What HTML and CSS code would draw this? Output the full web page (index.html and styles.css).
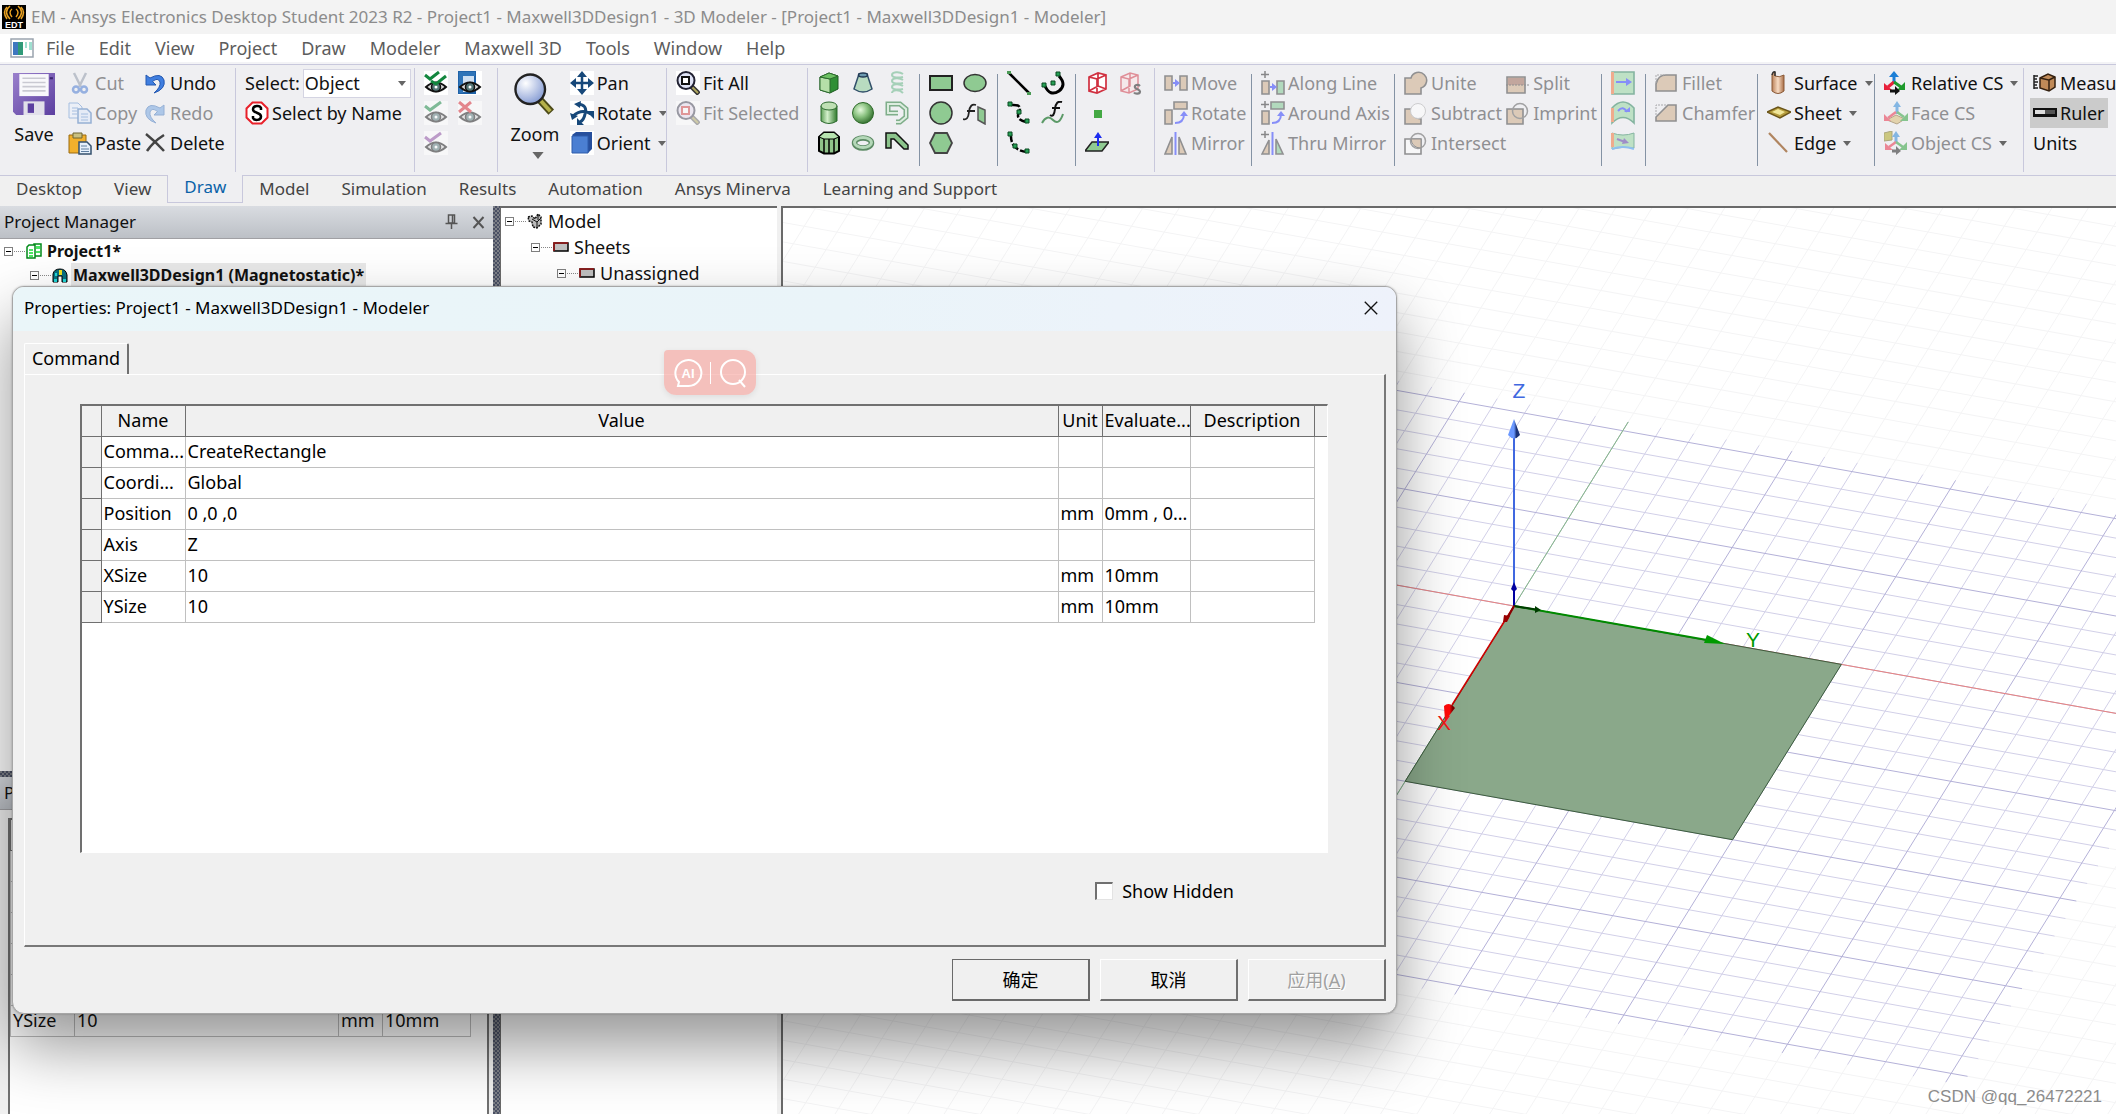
FILE: index.html
```html
<!DOCTYPE html>
<html lang="en">
<head>
<meta charset="utf-8">
<title>EM - Ansys Electronics Desktop Student 2023 R2</title>
<link rel="stylesheet" href="styles.css">
</head>
<body>
<svg class="sprite" aria-hidden="true">
  <defs>
    <linearGradient id="gGreen" x1="0" x2="1"><stop offset="0" stop-color="#5fa058"/><stop offset=".4" stop-color="#d4f0cc"/><stop offset="1" stop-color="#2f7a2c"/></linearGradient>
    <radialGradient id="gBall" cx=".38" cy=".35" r=".7"><stop offset="0" stop-color="#e6fadd"/><stop offset=".5" stop-color="#86bf7c"/><stop offset="1" stop-color="#2e6a2a"/></radialGradient>
    <radialGradient id="gLens" cx=".35" cy=".3" r=".8"><stop offset="0" stop-color="#fff"/><stop offset="1" stop-color="#7b93d0"/></radialGradient>
    <linearGradient id="gTube" x1="0" x2="1"><stop offset="0" stop-color="#b98058"/><stop offset=".5" stop-color="#f8dcc4"/><stop offset="1" stop-color="#a86c44"/></linearGradient>
    <linearGradient id="gSave" x1="0" x2="1" y2="1"><stop offset="0" stop-color="#9a80cc"/><stop offset="1" stop-color="#5c3fa0"/></linearGradient>
  </defs>
  <symbol id="eye" viewBox="0 0 24 24"><path d="M2 16Q12 7 22 16Q12 25 2 16z" fill="#d8d8d8" stroke="#111" stroke-width="2"/><circle cx="12" cy="16" r="4.500" fill="#577" stroke="#111" stroke-width="1.500"/><circle cx="12" cy="16" r="1.500" fill="#fff"/></symbol>
  <symbol id="save" viewBox="0 0 40 40"><path d="M0 0H40V40H3L0 37z" fill="url(#gSave)"/><path d="M6 1H34V22H6z" fill="#f8f8fb"/><path d="M9 5H31M9 9H31M9 13H31M9 17H31" stroke="#c9c9d2" stroke-width="1.500"/><path d="M10 27H30V40H10z" fill="#e2e0ea"/><path d="M14 29H20V38H14z" fill="#5c3fa0"/><path d="M35 4h3v2h-3z" fill="#3a2470"/></symbol>
  <symbol id="cut" viewBox="0 0 24 24"><path d="M6 2l7 14M18 2l-7 14" stroke="#8b95a5" stroke-width="2.500"/><circle cx="8" cy="18.500" r="3" fill="none" stroke="#3f73cf" stroke-width="2.500"/><circle cx="16" cy="18.500" r="3" fill="none" stroke="#3f73cf" stroke-width="2.500"/></symbol>
  <symbol id="copy" viewBox="0 0 24 24"><path d="M1 2H10L14 6V17H1z" fill="#e8f0fc" stroke="#5f8ed0"/><path d="M10 8H19L23 12V22H10z" fill="#dce9fa" stroke="#3f73b8" stroke-width="1.500"/><path d="M4 7h6M4 10h5M4 13h5M13 13h7M13 16h7M13 19h7" stroke="#5f8ed0"/></symbol>
  <symbol id="paste" viewBox="0 0 24 24"><path d="M1 4H18V22H1z" fill="#f1b02c" stroke="#9a6a10"/><path d="M5 2H14V7H5z" fill="#c9c080" stroke="#6e6430"/><path d="M11 11H19L23 15V23H11z" fill="#e6f0fb" stroke="#34506e" stroke-width="1.500"/><path d="M13 15h6M13 18h8M13 20.500h8" stroke="#5f7ea0"/></symbol>
  <symbol id="undo" viewBox="0 0 24 24"><path d="M3 4V14H13L9.500 10.500Q15 6 17 11Q18 16 11 22Q23 18 21 9Q18 1 7 7z" fill="#3f7ee0" stroke="#2458b0"/></symbol>
  <symbol id="redo" viewBox="0 0 24 24"><path d="M21 4V14H11L14.500 10.500Q9 6 7 11Q6 16 13 22Q1 18 3 9Q6 1 17 7z" fill="#6da0e0" stroke="#3f73b8"/></symbol>
  <symbol id="del" viewBox="0 0 24 24"><path d="M3 3Q13 11 21 20M21 4Q10 11 4 20" stroke="#444" stroke-width="2.500" fill="none"/></symbol>
  <symbol id="sname" viewBox="0 0 24 24"><path d="M7.500 1.500H16.500L22.500 7.500V16.500L16.500 22.500H7.500L1.500 16.500V7.500z" fill="#fff" stroke="#e8202a" stroke-width="2"/><path d="M16 9V7C15 4 8 4 8 8.500C8 12.500 16 11 16 15.500C16 20 9 19.500 8 17V15" fill="none" stroke="#000" stroke-width="2.500"/></symbol>
  <symbol id="v1" viewBox="0 0 24 24"><path fill="#fff" d="M0 0h24v24H0z"/><use href="#eye"/><path d="M1 4l5 4 9-7M7 10l5 3 10-8" fill="none" stroke="#12863e" stroke-width="3"/></symbol>
  <symbol id="v2" viewBox="0 0 24 24"><path fill="#fff" d="M0 0h24v24H0z"/><path d="M1 1H17V22H1z" fill="#cfe0f2" stroke="#1f62a8" stroke-width="2"/><path d="M1 1H17V5H1zM1 5H5V22H1z" fill="#2f74b8"/><use href="#eye"/></symbol>
  <symbol id="v3" viewBox="0 0 24 24"><path fill="#fff" d="M0 0h24v24H0z"/><use href="#eye"/><path d="M1 5l5 4L17 1" fill="none" stroke="#12863e" stroke-width="3"/></symbol>
  <symbol id="v4" viewBox="0 0 24 24"><path fill="#fff" d="M0 0h24v24H0z"/><use href="#eye"/><path d="M1 1l12 10M13 1L1 11" fill="none" stroke="#d8202a" stroke-width="3"/></symbol>
  <symbol id="v5" viewBox="0 0 24 24"><path fill="#fff" d="M0 0h24v24H0z"/><use href="#eye"/><path d="M1 6l5 4L17 2" fill="none" stroke="#8a4aa0" stroke-width="3"/></symbol>
  <symbol id="zoom" viewBox="0 0 44 44"><path d="M27 28L39 41" stroke="#4c4a18" stroke-width="8"/><path d="M28 29L38 40" stroke="#b5b04a" stroke-width="4"/><circle cx="17" cy="17" r="15.500" fill="url(#gLens)" stroke="#222" stroke-width="2.500"/></symbol>
  <symbol id="pan" viewBox="0 0 24 24"><path fill="#fff" d="M0 0h24v24H0z"/><path d="M12 3V21M3 12H21" stroke="#17487a" stroke-width="2.500"/><path d="M12 0l5 6H7zM12 24l5-6H7zM0 12l6-5V17zM24 12l-6-5V17z" fill="#17487a"/></symbol>
  <symbol id="rot" viewBox="0 0 24 24"><path fill="#fff" d="M0 0h24v24H0z"/><path d="M8 3Q18 4 15 13Q14 19 10 21M3 15Q12 7 21 13" fill="none" stroke="#17487a" stroke-width="3"/><path d="M11 0L4 3L10 7zM0 12L2 19L8 15zM16 10h8v8zM7 17v7h7z" fill="#17487a"/></symbol>
  <symbol id="orient" viewBox="0 0 24 24"><path fill="#fff" d="M0 0h24v24H0z"/><path d="M2 4L6 1H22V18L18 22z" fill="#274f9c"/><path d="M2 5H18V22H2z" fill="#4b7fd2" stroke="#2f5cab"/></symbol>
  <symbol id="fit" viewBox="0 0 24 24"><path fill="#fff" d="M0 0h24v24H0z"/><path d="M15 15L23 23" stroke="#333" stroke-width="5"/><path d="M16 16L22 22" stroke="#b0a860" stroke-width="2"/><circle cx="10" cy="9.500" r="8.500" fill="#dfe3f5" stroke="#223" stroke-width="2"/><path d="M6 6h7v7H6z" fill="#fff" stroke="#111" stroke-width="2"/></symbol>
  <symbol id="fits" viewBox="0 0 24 24"><path fill="#fff" d="M0 0h24v24H0z"/><path d="M15 15L23 23" stroke="#666" stroke-width="5"/><path d="M16 16L22 22" stroke="#b0a860" stroke-width="2"/><circle cx="10" cy="9.500" r="8.500" fill="#e8dff0" stroke="#445" stroke-width="2"/><path d="M6 6h7v7H6z" fill="#fff" stroke="#d04040" stroke-width="2"/></symbol>
  <symbol id="box" viewBox="0 0 24 24"><path d="M3 6L12 2L21 5V18L13 22L3 19z" fill="#2f8f35" stroke="#1c5a20"/><path d="M3 6L13 8V22L3 19z" fill="#b5dfa8" stroke="#2c6a2e"/><path d="M3 6L12 2L21 5L13 8z" fill="#6cc062" stroke="#2c6a2e"/></symbol>
  <symbol id="frus" viewBox="0 0 24 24"><path d="M8 3H16L21 18Q12 24 3 18z" fill="#b8dbc0" stroke="#31506a" stroke-width="1.500"/><ellipse cx="12" cy="4" rx="4.500" ry="2" fill="#6d9ab0" stroke="#223a55" stroke-width="1.500"/></symbol>
  <symbol id="helix" viewBox="0 0 24 24"><path d="M18 3C14 0 7 1 7 4C7 7 14 7 18 6M18 9C14 6 7 7 7 10C7 13 14 13 18 12M18 15C14 12 7 13 7 16C7 19 14 19 18 18M18 22C14 18 7 19 7 22" fill="none" stroke="#a5d0b8" stroke-width="2"/></symbol>
  <symbol id="cyl" viewBox="0 0 24 24"><path d="M4 5V20Q12 25 20 20V5z" fill="url(#gGreen)" stroke="#2c6a2e"/><ellipse cx="12" cy="5" rx="8" ry="4" fill="#bfe0b4" stroke="#2c6a2e"/></symbol>
  <symbol id="ball" viewBox="0 0 24 24"><circle cx="12" cy="12" r="10.500" fill="url(#gBall)" stroke="#2e6a2a"/></symbol>
  <symbol id="sweep" viewBox="0 0 24 24"><path d="M11 21H15L21 16V8L15 3H3V12H13" fill="none" stroke="#7fae8a" stroke-width="5"/><path d="M11 21H15L21 16V8L15 3H3V12H13" fill="none" stroke="#dcecdf" stroke-width="2"/></symbol>
  <symbol id="poly" viewBox="0 0 24 24"><path d="M2 6L7 1.500H17L22 6V20L17 22.500H7L2 20z" fill="#8fc48a" stroke="#000" stroke-width="2"/><path d="M2 6L7 1.500H17L22 6L17 8H7z" fill="#b7e4b0" stroke="#000"/><path d="M7 8V22M12 8V22M17 8V22" stroke="#000" stroke-width="1.500"/></symbol>
  <symbol id="torus" viewBox="0 0 24 24"><ellipse cx="12" cy="12" rx="8.500" ry="5" fill="none" stroke="#5c8a64" stroke-width="5.500"/><ellipse cx="12" cy="11.500" rx="8.500" ry="5" fill="none" stroke="#b4d8b8" stroke-width="3"/></symbol>
  <symbol id="bond" viewBox="0 0 24 24"><path d="M1 17V2H11L23 14V18H19L9 8H6V17z" fill="#8cc48c" stroke="#111" stroke-width="1.500"/></symbol>
  <symbol id="rect" viewBox="0 0 24 24"><path d="M1 5H23V19H1z" fill="#8fca92" stroke="#222" stroke-width="2"/></symbol>
  <symbol id="ell" viewBox="0 0 24 24"><ellipse cx="12" cy="12" rx="11" ry="8.500" fill="#8fca92" stroke="#333" stroke-width="1.500"/></symbol>
  <symbol id="circ" viewBox="0 0 24 24"><circle cx="12" cy="12" r="11" fill="#8fca92" stroke="#333" stroke-width="1.500"/></symbol>
  <symbol id="fsurf" viewBox="0 0 24 24"><path d="M0 18Q5 20 6 11T13 4M4 10H12" fill="none" stroke="#222" stroke-width="1.800"/><path d="M15 6L22 9V23L15 19z" fill="#8fca92" stroke="#555" stroke-width="1.500"/></symbol>
  <symbol id="hex" viewBox="0 0 24 24"><path d="M6 2H18L23 12L18 22H6L1 12z" fill="#8fca92" stroke="#444" stroke-width="1.800"/></symbol>
  <symbol id="line" viewBox="0 0 24 24"><path d="M2 2L22 22" stroke="#000" stroke-width="2.500"/><path d="M0 0h4v3H0zM20 21h4v3h-4z" fill="#4a9a55"/></symbol>
  <symbol id="arc" viewBox="0 0 24 24"><path d="M18 5Q26 14 18 20Q9 26 4 15" fill="none" stroke="#000" stroke-width="3"/><path d="M15 1h4v4h-4zM1 12h4v4H1zM10 10h4v4h-4z" fill="#25a055" stroke="#0a4a22"/></symbol>
  <symbol id="spl" viewBox="0 0 24 24"><path d="M4 4Q16 3 12 11Q8 19 20 21" fill="none" stroke="#000" stroke-width="2.500" stroke-dasharray="9 2"/><path d="M1 1h4v4H1zM10 9h4v4h-4zM18 18h4v4h-4z" fill="#25a055" stroke="#0a4a22"/></symbol>
  <symbol id="fcur" viewBox="0 0 24 24"><path d="M9 14Q13 17 14 8T21 1M11 7H19" fill="none" stroke="#111" stroke-width="2"/><path d="M1 22Q6 13 12 19T22 13" fill="none" stroke="#5c9a68" stroke-width="2"/></symbol>
  <symbol id="arc3" viewBox="0 0 24 24"><path d="M4 3Q3 19 20 21" fill="none" stroke="#000" stroke-width="2.500" stroke-dasharray="8 2"/><path d="M1 1h4v4H1zM6 13h4v4H6zM18 18h4v4h-4z" fill="#25a055" stroke="#0a4a22"/></symbol>
  <symbol id="rbox" viewBox="0 0 24 24"><path d="M4 6L13 2L21 4V18L12 22L4 20zM4 6L12 8V22M12 8L21 4M13 2V15L4 20M13 15L21 18" fill="#fff" stroke="#d03040" stroke-width="1.700"/></symbol>
  <symbol id="rboxs" viewBox="0 0 24 24"><path d="M2 6L11 2L19 4V18L10 22L2 20zM2 6L10 8V22M10 8L19 4M11 2V15L2 20" fill="#fbe4e6" stroke="#d03040" stroke-width="1.500"/><path d="M21 15C19 13 15 14 16 16.500C17 18.500 21 18 21 20.500C21 23.500 16 23 15 21.500" fill="none" stroke="#111" stroke-width="2.200"/></symbol>
  <symbol id="pt" viewBox="0 0 24 24"><path d="M9 9h8v8H9z" fill="#43a843"/></symbol>
  <symbol id="plane" viewBox="0 0 24 24"><path d="M0 20L7 11H24L17 20z" fill="#8fca92" stroke="#222" stroke-width="1.500"/><path d="M13 15V5" stroke="#1c2cf0" stroke-width="2"/><path d="M13 1l4 6H9z" fill="#1c2cf0"/></symbol>
  <symbol id="mv" viewBox="0 0 24 24"><path d="M1 5H8V19H1zM16 5H23V19H16z" fill="#cba77f" stroke="#333" stroke-width="1.600"/><path d="M9 12H13" stroke="#2030ff" stroke-width="2"/><path d="M11 8l5 4-5 4z" fill="#2030ff"/></symbol>
  <symbol id="ro" viewBox="0 0 24 24"><path d="M1 9H8V23H1zM10 1H23V8H10z" fill="#cba77f" stroke="#333" stroke-width="1.600"/><path d="M11 22Q20 22 20 13" fill="none" stroke="#2030ff" stroke-width="2"/><path d="M16 15l4-5 4 5z" fill="#2030ff"/></symbol>
  <symbol id="mi" viewBox="0 0 24 24"><path d="M8 6V23H1zM15 6V23H22z" fill="#cba77f" stroke="#333" stroke-width="1.600"/><path d="M11.500 1V24" stroke="#2030ff" stroke-width="2"/></symbol>
  <symbol id="al" viewBox="0 0 24 24"><path d="M4 0V7M0 3.500H8" stroke="#222" stroke-width="1.500"/><path d="M1 10H8V23H1z" fill="#cba77f" stroke="#333" stroke-width="1.600"/><path d="M16 10H23V23H16z" fill="#76c48a" stroke="#333" stroke-width="1.600"/><path d="M9 16H13" stroke="#2030ff" stroke-width="2"/><path d="M11 12l5 4-5 4z" fill="#2030ff"/></symbol>
  <symbol id="ar" viewBox="0 0 24 24"><path d="M4 0V7M0 3.500H8" stroke="#222" stroke-width="1.500"/><path d="M1 10H8V23H1z" fill="#cba77f" stroke="#333" stroke-width="1.600"/><path d="M10 1H23V8H10z" fill="#76c48a" stroke="#333" stroke-width="1.600"/><path d="M11 22Q20 22 20 13" fill="none" stroke="#2030ff" stroke-width="2"/><path d="M16 15l4-5 4 5z" fill="#2030ff"/></symbol>
  <symbol id="th" viewBox="0 0 24 24"><path d="M4 0V7M0 3.500H8" stroke="#222" stroke-width="1.500"/><path d="M8 9V23H1z" fill="#cba77f" stroke="#333" stroke-width="1.600"/><path d="M15 8V23H22z" fill="#76c48a" stroke="#333" stroke-width="1.600"/><path d="M11.500 1V24" stroke="#2030ff" stroke-width="2"/></symbol>
  <symbol id="un" viewBox="0 0 24 24"><path d="M1 7H7A8 8 0 1 1 17 17V23H1z" fill="#cba77f" stroke="#333" stroke-width="1.600"/></symbol>
  <symbol id="su" viewBox="0 0 24 24"><path d="M1 8H8Q7 17 17 18V23H1z" fill="#cba77f" stroke="#333" stroke-width="1.600"/><circle cx="14" cy="10" r="7.500" fill="#fff" stroke="#aaa"/></symbol>
  <symbol id="in" viewBox="0 0 24 24"><path d="M1 8H17V23H1z" fill="#fff" stroke="#333" stroke-width="1.600"/><circle cx="14" cy="10" r="7.500" fill="none" stroke="#555" stroke-width="1.500"/><path d="M7 8H17V17Q8 17 7 8z" fill="#cba77f" stroke="#333"/></symbol>
  <symbol id="sp" viewBox="0 0 24 24"><path d="M1 6H19V22H1z" fill="#cba77f" stroke="#333" stroke-width="1.600"/><path d="M2 7H18V14H2z" fill="#97604a"/><path d="M0 14H24" stroke="#333" stroke-dasharray="2 1"/></symbol>
  <symbol id="im" viewBox="0 0 24 24"><path d="M1 8H17V23H1z" fill="#cba77f" stroke="#333" stroke-width="1.600"/><circle cx="14" cy="10" r="7.500" fill="none" stroke="#555" stroke-width="1.500"/></symbol>
  <symbol id="s1" viewBox="0 0 24 24"><path d="M1 1H23V23H1z" fill="#8fd49a" stroke="#1c7a50" stroke-width="1.600"/><path d="M0 1h3v22H0z" fill="#f06a2a"/><path d="M5 11H17" stroke="#2030ff" stroke-width="2"/><path d="M15 7l6 4-6 4z" fill="#2030ff"/></symbol>
  <symbol id="s2" viewBox="0 0 24 24"><path d="M1 7Q12 -5 23 7V22Q12 11 1 22z" fill="#8fd49a" stroke="#1c7a50" stroke-width="1.600"/><path d="M0 7h3v14H0z" fill="#f06a2a"/><path d="M7 10Q12 4 16 11" fill="none" stroke="#2030ff" stroke-width="2"/><path d="M13 11h6V6z" fill="#2030ff"/></symbol>
  <symbol id="s3" viewBox="0 0 24 24"><path d="M1 2Q12 6 23 2V17Q12 15 1 18z" fill="#8fd49a" stroke="#1c7a50"/><path d="M1 18Q12 14 23 18" fill="none" stroke="#3090f0" stroke-width="2"/><path d="M0 2h3v14H0z" fill="#f06a2a"/><path d="M6 8L14 11" stroke="#5030a0" stroke-width="2"/><path d="M13 7l5 5-7 1z" fill="#5030a0"/></symbol>
  <symbol id="fi" viewBox="0 0 24 24"><path d="M1 20V13Q3 4 11 4H21V20z" fill="#cba77f" stroke="#333" stroke-width="1.600"/><path d="M1 12V4H9" fill="none" stroke="#666" stroke-dasharray="2 1"/></symbol>
  <symbol id="ch" viewBox="0 0 24 24"><path d="M1 20V16L13 4H21V20z" fill="#cba77f" stroke="#333" stroke-width="1.600"/><path d="M1 14V4H11" fill="none" stroke="#666" stroke-dasharray="2 1"/></symbol>
  <symbol id="sf" viewBox="0 0 24 24"><path d="M5 4Q5 1 8 1L8 5Q12 7 17 4V20Q11 25 5 20z" fill="url(#gTube)" stroke="#8a5a38"/><path d="M5 4Q6 0 8 1V5" fill="none" stroke="#333" stroke-width="1.500"/></symbol>
  <symbol id="sh" viewBox="0 0 24 24"><path d="M0 11L11 6L24 11L13 17z" fill="#b59c3c" stroke="#6a5418" stroke-width="1.500"/><path d="M5 11L11 8L18 11L13 14z" fill="#f0e69a"/></symbol>
  <symbol id="ed" viewBox="0 0 24 24"><path d="M2 2L20 21" stroke="#b08560" stroke-width="2.200"/></symbol>
  <symbol id="cs" viewBox="0 0 24 24"><path d="M10 13V5" stroke="#1c7fd6" stroke-width="3"/><path d="M10 0l5 6H5z" fill="#1c7fd6"/><path d="M10 11L4 16" stroke="#e8203a" stroke-width="3"/><path d="M0 12V19H8z" fill="#e8203a"/><path d="M10 11L17 16" stroke="#1f9a2c" stroke-width="3"/><path d="M21 11V19H13z" fill="#1f9a2c"/><path d="M6 20H13" stroke="#111" stroke-width="3"/><path d="M11 15l5 5-5 4z" fill="#111"/></symbol>
  <symbol id="fcs" viewBox="0 0 24 24"><path d="M3 19L12 14L21 18L13 23z" fill="#d8b96a" stroke="#7a5a20"/><path d="M13 13V5" stroke="#1c7fd6" stroke-width="3"/><path d="M13 0l4 6H9z" fill="#1c7fd6"/><path d="M12 11L4 17" stroke="#e8203a" stroke-width="2.500"/><path d="M0 13V20H7z" fill="#e8203a"/><path d="M13 11L20 16" stroke="#1f9a2c" stroke-width="2.500"/><path d="M24 12V20H16z" fill="#1f9a2c"/></symbol>
  <symbol id="ocs" viewBox="0 0 24 24"><path d="M0 2L8 0V9L0 10z" fill="#a8a010" stroke="#665f08"/><path d="M12 12V5" stroke="#1c7fd6" stroke-width="3"/><path d="M12 0l4 6H8z" fill="#1c7fd6"/><path d="M12 11L5 16" stroke="#e8203a" stroke-width="2.500"/><path d="M1 12V19H9z" fill="#e8203a"/><path d="M12 11L19 16" stroke="#1f9a2c" stroke-width="2.500"/><path d="M23 11V19H15z" fill="#1f9a2c"/><path d="M8 20H13" stroke="#111" stroke-width="3"/><path d="M12 15l5 5-5 4z" fill="#111"/></symbol>
  <symbol id="me" viewBox="0 0 24 24"><path d="M1 4V18M1 5H5M1 8H4M1 11H5M1 14H4M1 17H5" stroke="#222" stroke-width="1.500"/><path d="M7 7L15 3L22 6V16L16 20L7 17z" fill="#c08a58" stroke="#332010" stroke-width="1.500"/><path d="M7 7L16 9V20M16 9L22 6" fill="none" stroke="#332010" stroke-width="1.500"/></symbol>
  <symbol id="ru" viewBox="0 0 24 24"><path d="M0 7H24V16H0z" fill="#111"/><path d="M2 9H12V13H2z" fill="#ddd"/><path d="M12 9H22V13H12z" fill="#555"/></symbol>
  <symbol id="dd" viewBox="0 0 8 5"><path d="M0 0H8L4 5z" fill="#666"/></symbol>
  <symbol id="sheet" viewBox="0 0 16 16"><path d="M1 4H15V12H1z" fill="#c0c0c0" stroke="#000" stroke-width="1.500"/><path d="M15 4H1V12" fill="none" stroke="#a01818" stroke-width="1.500"/></symbol>
</svg>

<header class="titlebar">
  <svg class="i" viewBox="0 0 24 24" aria-hidden="true"><path d="M0 0h24v24H0z"/><path d="M8 1Q1 7 8 14M10 4Q6 7 10 12M16 1Q23 7 16 14M14 4Q18 7 14 12M5 2Q0 7 5 14M19 2Q24 7 19 14" fill="none" stroke="#e8a020" stroke-width="1.500"/><text x="12" y="23" class="edt">EDT</text></svg>
  <h1>EM - Ansys Electronics Desktop Student 2023 R2 - Project1 - Maxwell3DDesign1 - 3D Modeler - [Project1 - Maxwell3DDesign1 - Modeler]</h1>
</header>

<nav class="menubar" aria-label="Menu">
  <svg class="i appwin" viewBox="0 0 24 20" aria-hidden="true"><path d="M1 1H23V19H1z" fill="#fff" stroke="#9aa4ae" stroke-width="1.500"/><path d="M3 4H13V17H3z" fill="#2f9a78"/><path d="M3 4H8V17H3z" fill="#3f78c0"/><path d="M15 4H17V10H15zM19 4H22V12H19z" fill="#9fe0d0"/></svg>
  <button>File</button><button>Edit</button><button>View</button><button>Project</button><button>Draw</button><button>Modeler</button><button>Maxwell 3D</button><button>Tools</button><button>Window</button><button>Help</button>
</nav>

<section class="ribbon" aria-label="Draw tools">
  <div class="group clip">
    <button class="big"><svg class="big-icon"><use href="#save"/></svg>Save</button>
    <div class="rows">
      <button class="t" disabled><svg class="i"><use href="#cut"/></svg>Cut</button>
      <button class="t" disabled><svg class="i"><use href="#copy"/></svg>Copy</button>
      <button class="t"><svg class="i"><use href="#paste"/></svg>Paste</button>
    </div>
    <div class="rows">
      <button class="t"><svg class="i"><use href="#undo"/></svg>Undo</button>
      <button class="t" disabled><svg class="i"><use href="#redo"/></svg>Redo</button>
      <button class="t"><svg class="i"><use href="#del"/></svg>Delete</button>
    </div>
  </div>
  <div class="group select">
    <div class="rows">
      <div class="t pick"><label for="mode">Select:</label><span class="combo"><select id="mode"><option>Object</option><option>Face</option></select><svg class="dd"><use href="#dd"/></svg></span></div>
      <button class="t"><svg class="i"><use href="#sname"/></svg>Select by Name</button>
    </div>
  </div>
  <div class="group icons">
    <button aria-label="Show selection"><svg class="i"><use href="#v1"/></svg></button>
    <button aria-label="Visibility dialog"><svg class="i"><use href="#v2"/></svg></button>
    <button aria-label="Show in view" disabled><svg class="i"><use href="#v3"/></svg></button>
    <button aria-label="Hide in view" disabled><svg class="i"><use href="#v4"/></svg></button>
    <button aria-label="Show only" disabled><svg class="i"><use href="#v5"/></svg></button>
  </div>
  <div class="group">
    <button class="big zoom"><svg class="big-icon"><use href="#zoom"/></svg>Zoom<svg class="dd wide"><use href="#dd"/></svg></button>
    <div class="rows">
      <button class="t"><svg class="i"><use href="#pan"/></svg>Pan</button>
      <button class="t"><svg class="i"><use href="#rot"/></svg>Rotate<svg class="dd"><use href="#dd"/></svg></button>
      <button class="t"><svg class="i"><use href="#orient"/></svg>Orient<svg class="dd"><use href="#dd"/></svg></button>
    </div>
  </div>
  <div class="group">
    <div class="rows">
      <button class="t"><svg class="i"><use href="#fit"/></svg>Fit All</button>
      <button class="t" disabled><svg class="i"><use href="#fits"/></svg>Fit Selected</button>
    </div>
  </div>
  <div class="group icons three inner">
    <button aria-label="Box"><svg class="i"><use href="#box"/></svg></button>
    <button aria-label="Cone"><svg class="i"><use href="#frus"/></svg></button>
    <button aria-label="Helix"><svg class="i"><use href="#helix"/></svg></button>
    <button aria-label="Cylinder"><svg class="i"><use href="#cyl"/></svg></button>
    <button aria-label="Sphere"><svg class="i"><use href="#ball"/></svg></button>
    <button aria-label="Spiral"><svg class="i"><use href="#sweep"/></svg></button>
    <button aria-label="Regular polyhedron"><svg class="i"><use href="#poly"/></svg></button>
    <button aria-label="Torus"><svg class="i"><use href="#torus"/></svg></button>
    <button aria-label="Bondwire"><svg class="i"><use href="#bond"/></svg></button>
  </div>
  <div class="group icons inner">
    <button aria-label="Rectangle"><svg class="i"><use href="#rect"/></svg></button>
    <button aria-label="Ellipse"><svg class="i"><use href="#ell"/></svg></button>
    <button aria-label="Circle"><svg class="i"><use href="#circ"/></svg></button>
    <button aria-label="Equation surface"><svg class="i"><use href="#fsurf"/></svg></button>
    <button aria-label="Regular polygon"><svg class="i"><use href="#hex"/></svg></button>
  </div>
  <div class="group icons inner">
    <button aria-label="Line"><svg class="i"><use href="#line"/></svg></button>
    <button aria-label="Center arc"><svg class="i"><use href="#arc"/></svg></button>
    <button aria-label="Spline"><svg class="i"><use href="#spl"/></svg></button>
    <button aria-label="Equation curve"><svg class="i"><use href="#fcur"/></svg></button>
    <button aria-label="Three point arc"><svg class="i"><use href="#arc3"/></svg></button>
  </div>
  <div class="group icons">
    <button aria-label="Region"><svg class="i"><use href="#rbox"/></svg></button>
    <button aria-label="Subregion" disabled><svg class="i"><use href="#rboxs"/></svg></button>
    <button class="first" aria-label="Point"><svg class="i"><use href="#pt"/></svg></button>
    <button class="first" aria-label="Plane"><svg class="i"><use href="#plane"/></svg></button>
  </div>
  <div class="group inner">
    <div class="rows">
      <button class="t" disabled><svg class="i"><use href="#mv"/></svg>Move</button>
      <button class="t" disabled><svg class="i"><use href="#ro"/></svg>Rotate</button>
      <button class="t" disabled><svg class="i"><use href="#mi"/></svg>Mirror</button>
    </div>
  </div>
  <div class="group inner">
    <div class="rows">
      <button class="t" disabled><svg class="i"><use href="#al"/></svg>Along Line</button>
      <button class="t" disabled><svg class="i"><use href="#ar"/></svg>Around Axis</button>
      <button class="t" disabled><svg class="i"><use href="#th"/></svg>Thru Mirror</button>
    </div>
  </div>
  <div class="group inner bool">
    <div class="rows">
      <button class="t" disabled><svg class="i"><use href="#un"/></svg>Unite</button>
      <button class="t" disabled><svg class="i"><use href="#su"/></svg>Subtract</button>
      <button class="t" disabled><svg class="i"><use href="#in"/></svg>Intersect</button>
    </div>
    <div class="rows">
      <button class="t" disabled><svg class="i"><use href="#sp"/></svg>Split</button>
      <button class="t" disabled><svg class="i"><use href="#im"/></svg>Imprint</button>
    </div>
  </div>
  <div class="group inner">
    <div class="rows">
      <button class="t" aria-label="Sweep along vector" disabled><svg class="i"><use href="#s1"/></svg></button>
      <button class="t" aria-label="Sweep around axis" disabled><svg class="i"><use href="#s2"/></svg></button>
      <button class="t" aria-label="Sweep along path" disabled><svg class="i"><use href="#s3"/></svg></button>
    </div>
  </div>
  <div class="group inner">
    <div class="rows">
      <button class="t" disabled><svg class="i"><use href="#fi"/></svg>Fillet</button>
      <button class="t" disabled><svg class="i"><use href="#ch"/></svg>Chamfer</button>
    </div>
  </div>
  <div class="group inner">
    <div class="rows">
      <button class="t"><svg class="i"><use href="#sf"/></svg>Surface<svg class="dd"><use href="#dd"/></svg></button>
      <button class="t"><svg class="i"><use href="#sh"/></svg>Sheet<svg class="dd"><use href="#dd"/></svg></button>
      <button class="t"><svg class="i"><use href="#ed"/></svg>Edge<svg class="dd"><use href="#dd"/></svg></button>
    </div>
  </div>
  <div class="group">
    <div class="rows">
      <button class="t"><svg class="i"><use href="#cs"/></svg>Relative CS<svg class="dd"><use href="#dd"/></svg></button>
      <button class="t" disabled><svg class="i"><use href="#fcs"/></svg>Face CS</button>
      <button class="t" disabled><svg class="i"><use href="#ocs"/></svg>Object CS<svg class="dd"><use href="#dd"/></svg></button>
    </div>
  </div>
  <div class="group units">
    <div class="rows">
      <button class="t"><svg class="i"><use href="#me"/></svg>Measure</button>
      <button class="t on" aria-pressed="true"><svg class="i"><use href="#ru"/></svg>Ruler</button>
      <button class="t">Units</button>
    </div>
  </div>
</section>

<nav class="tabs" aria-label="Ribbon tabs">
  <button>Desktop</button><button>View</button><button class="active">Draw</button><button>Model</button><button>Simulation</button><button>Results</button><button>Automation</button><button>Ansys Minerva</button><button>Learning and Support</button>
</nav>

<main class="work">
  <div class="left">
    <section class="manager">
      <header class="panel-head"><h2>Project Manager</h2>
        <button aria-label="Pin"><svg viewBox="0 0 14 16"><path d="M4 1H10V9H4zM8 1V9M1 9.500H13M7 10V15" fill="none" stroke="#555" stroke-width="1.500"/></svg></button>
        <button aria-label="Close"><svg viewBox="0 0 14 16"><path d="M2 3L12 14M12 3L2 14" stroke="#555" stroke-width="2"/></svg></button>
      </header>
      <ul class="tree bold">
        <li><span class="exp"></span><svg class="n" viewBox="0 0 16 16"><path d="M8 1H15V13H8z" fill="#fff" stroke="#008a18" stroke-width="1.500"/><path d="M1 4L3 2H9V15H1z" fill="#fff" stroke="#008a18" stroke-width="1.500"/><path d="M3 7H7M3 10H7M3 13H7M11 3V6M13 3V6M11 8V10M13 8V10" stroke="#10e030" stroke-width="1.500"/></svg>Project1*</li>
        <li class="l2"><span class="exp"></span><svg class="n" viewBox="0 0 16 16"><path d="M1 15V7Q2 2 8 2T15 8V15H10V9H6V15z" fill="#0a7080" stroke="#000"/><path d="M2 12h3v3H2zM11 12h3v3h-3zM3 6h2v3H3z" fill="#20d8d8"/><path d="M7 3h3v5H7z" fill="#f0e020"/></svg><span class="sel">Maxwell3DDesign1 (Magnetostatic)*</span></li>
      </ul>
    </section>
    <div class="hsplit"></div>
    <section class="props">
      <header class="panel-head"><h2>Properties</h2></header>
      <div class="props-frame">
        <table class="mini">
          <colgroup><col class="m-name"><col><col class="m-unit"><col class="m-eval"></colgroup>
          <thead><tr><th>Name</th><th>Value</th><th>Unit</th><th>Evalu...</th></tr></thead>
          <tbody>
            <tr><td>Com...</td><td>CreateRectangle</td><td></td><td></td></tr>
            <tr><td>Coo...</td><td>Global</td><td></td><td></td></tr>
            <tr><td>Posi...</td><td>0 ,0 ,0</td><td>mm</td><td>0mm , 0...</td></tr>
            <tr><td>Axis</td><td>Z</td><td></td><td></td></tr>
            <tr><td>XSize</td><td>10</td><td>mm</td><td>10mm</td></tr>
            <tr><td>YSize</td><td>10</td><td>mm</td><td>10mm</td></tr>
          </tbody>
        </table>
      </div>
    </section>
  </div>
  <div class="vsplit"></div>
  <section class="model">
    <ul class="tree">
      <li><span class="exp"></span><svg class="n" viewBox="0 0 16 16"><path d="M1 4L5 3L8 6L11 1L14 4V11L10 15L6 14L5 9L2 8z" fill="#bbb" stroke="#111" stroke-width="1.500" stroke-dasharray="2 1"/><path d="M5 6L10 9L14 5M10 9V15M11 2V7" stroke="#111" fill="none"/></svg>Model</li>
      <li class="l2"><span class="exp"></span><svg class="n"><use href="#sheet"/></svg>Sheets</li>
      <li class="l3"><span class="exp"></span><svg class="n"><use href="#sheet"/></svg>Unassigned</li>
    </ul>
  </section>
  <section class="viewer" aria-label="3D view">
    <svg class="scene" viewBox="0 0 1333 906" preserveAspectRatio="xMinYMin slice">
      <defs>
        <linearGradient id="cz" x1="0" x2="1"><stop offset=".5" stop-color="#6a98ff"/><stop offset=".7" stop-color="#1c3478"/></linearGradient>
        <linearGradient id="cx" x1="0" x2="1"><stop offset=".5" stop-color="#ff0a0a"/><stop offset=".8" stop-color="#700"/></linearGradient>
      </defs>
      <g id="grid" transform="matrix(32.740 5.840 -10.880 17.530 731 398)">
        <path class="faint" id="far"/>
        <path class="blank" d="M-10.500 -10.500H20.500V20.500H-10.500z"/>
        <path class="minor" id="minor"/>
        <path class="major" id="major"/>
        <path class="ax-r" d="M-10.500 0H20.500"/>
        <path class="ax-g" d="M0 -10.500V20.500"/>
        <path class="plate" d="M0 0H10V10H0z"/>
      </g>
      <path d="M731 398V228" stroke="#4068e0" stroke-width="2"/><path d="M731 398V376" stroke="#0000a0" stroke-width="2"/>
      <path d="M731 211L737 227Q731 234 725 227z" fill="url(#cz)"/><path d="M731 374l3 7-3 3-3-3z" fill="#0000a0"/>
      <path d="M731 398L924 432" stroke="#008a00" stroke-width="2"/><path d="M731 398L756 402" stroke="#003c00" stroke-width="2"/><path d="M752 398l6 4-6 3z" fill="#003c00"/>
      <path d="M924 427L942 436L921 435z" fill="#009a00"/>
      <path d="M731 398L669 497" stroke="#d00000" stroke-width="1.500"/><path d="M731 398L724 411" stroke="#800" stroke-width="2"/><path d="M721 407l6 1-3 6-4 0z" fill="#900"/>
      <path d="M661 498Q666 493 672 500L662 513z" fill="url(#cx)"/>
      <text x="736" y="190" class="lz">Z</text><text x="970" y="439" class="ly">Y</text><text x="661" y="522" class="lx">X</text>
    </svg>
    <p class="mark">CSDN @qq_26472221</p>
  </section>
</main>

<div class="dialog" role="dialog" aria-labelledby="dlg-title">
  <header class="dlg-head"><h2 id="dlg-title">Properties: Project1 - Maxwell3DDesign1 - Modeler</h2>
    <button aria-label="Close"><svg viewBox="0 0 18 18"><path d="M2 2L16 16M16 2L2 16" stroke="#111" stroke-width="1.500"/></svg></button></header>
  <div class="dlg-body">
    <div class="dlg-tabs"><button>Command</button></div>
    <div class="page">
      <div class="list">
        <table class="grid">
          <colgroup><col class="c-stub"><col class="c-name"><col><col class="c-unit"><col class="c-eval"><col class="c-desc"><col class="c-end"></colgroup>
          <thead><tr><th></th><th>Name</th><th>Value</th><th>Unit</th><th>Evaluate...</th><th>Description</th><th></th></tr></thead>
          <tbody>
            <tr><th></th><td>Comma...</td><td>CreateRectangle</td><td></td><td></td><td></td></tr>
            <tr><th></th><td>Coordi...</td><td>Global</td><td></td><td></td><td></td></tr>
            <tr><th></th><td>Position</td><td>0 ,0 ,0</td><td>mm</td><td>0mm , 0...</td><td></td></tr>
            <tr><th></th><td>Axis</td><td>Z</td><td></td><td></td><td></td></tr>
            <tr><th></th><td>XSize</td><td>10</td><td>mm</td><td>10mm</td><td></td></tr>
            <tr><th></th><td>YSize</td><td>10</td><td>mm</td><td>10mm</td><td></td></tr>
          </tbody>
        </table>
      </div>
      <label class="hidden-opt"><input type="checkbox">Show Hidden</label>
    </div>
    <div class="actions"><button class="default">确定</button><button>取消</button><button disabled>应用(<u>A</u>)</button></div>
  </div>
  <div class="badge">
    <svg viewBox="0 0 30 32" aria-hidden="true"><path d="M5 29L6 25A13 13 0 1 1 15 29z" fill="none" stroke="#fff" stroke-width="2"/><text x="15" y="21">AI</text></svg>
    <span></span>
    <svg viewBox="0 0 30 32" aria-hidden="true"><circle cx="15" cy="15" r="12" fill="none" stroke="#fff" stroke-width="2"/><path d="M21 23L27 30" stroke="#fff" stroke-width="2"/></svg>
  </div>
</div>
<script src="grid.js"></script>
</body>
</html>
```
FILE: grid.js
```js
// Builds the floor grid: fine lines every unit, strong lines every five units.
const far = [], minor = [], major = [];
for (let k = -60; k <= 60; k++) far.push(`M-60 ${k}H60M${k} -60V60`);
for (let k = -10; k <= 20; k++) {
  (k % 5 ? minor : major).push(`M-10.5 ${k}H20.5M${k} -10.5V20.5`);
}
document.getElementById('far').setAttribute('d', far.join(''));
document.getElementById('minor').setAttribute('d', minor.join(''));
document.getElementById('major').setAttribute('d', major.join(''));
```
FILE: styles.css
```css
* { box-sizing: border-box; }
body {
  margin: 0;
  height: 100vh;
  overflow: hidden;
  display: flex;
  flex-direction: column;
  background: #f0f0f0;
  color: #111;
  font: 18px/24px "Noto Sans", "Noto Sans CJK SC", sans-serif;
}
button { font: inherit; color: inherit; background: none; border: 0; padding: 0; margin: 0; white-space: nowrap; }
h1, h2 { margin: 0; font-size: 17px; font-weight: 400; white-space: nowrap; }
svg { display: block; flex: none; }
.sprite { position: absolute; width: 0; height: 0; }
.i { width: 24px; height: 24px; }

.titlebar { flex: none; height: 34px; padding: 0 2px; display: flex; align-items: center; gap: 5px; background: #f3f3f3; color: #8c8c8c; overflow: hidden; }
.edt { font: bold 9px "Liberation Sans", sans-serif; fill: #fff; text-anchor: middle; }

.menubar { flex: none; height: 30px; padding: 0 10px; display: flex; align-items: center; background: #fff; color: #5c5c5c; border-bottom: 2px solid #f3f3f6; }
.menubar button { padding: 0 12px; }
.appwin { width: 24px; height: 20px; }

.ribbon {
  flex: none;
  height: 112px;
  display: grid;
  grid-template-columns: 236px 179px 83px 169px 141px 112px 78px 78px 79px 97px 143px 207px 44px 112px 117px 149px 1fr;
  border: solid #c8c8dc;
  border-width: 1px 0;
  background: #efeff2;
  overflow: hidden;
}
.group { position: relative; display: flex; align-items: flex-start; padding: 3px 0 0 9px; overflow: hidden; }
.group::after { content: ""; position: absolute; right: 0; top: 3px; bottom: 3px; width: 1px; background: #c8c8dc; }
.group.inner::after { top: 9px; bottom: 9px; background: #8492a4; }
.group.units::after { content: none; }
.rows { display: grid; grid-auto-rows: 30px; justify-items: start; }
.t { display: flex; align-items: center; gap: 3px; }
.t:disabled, .icons button:disabled { color: #8f8f92; }
button:disabled .i { opacity: .5; }
.dd { width: 8px; height: 5px; margin-left: 4px; }
.dd.wide { width: 14px; height: 7px; margin: 6px 0 0 6px; }
.big { display: flex; flex-direction: column; align-items: center; width: 46px; padding-top: 5px; margin-left: 2px; }
.big-icon { width: 42px; height: 42px; margin-bottom: 7px; }
.clip .rows { width: 78px; padding-left: 11px; }
.clip .rows + .rows { padding-left: 8px; width: 90px; }
.zoom { width: 56px; margin: 0 7px 0 0; }
.select .pick { gap: 3px; }
.combo { display: grid; align-items: center; width: 108px; height: 29px; }
.combo select { grid-area: 1 / 1; width: 100%; height: 100%; padding: 0 1px; appearance: none; border: 1px solid #d4d4e2; border-radius: 0; background: #fff; font: inherit; color: inherit; }
.combo .dd { grid-area: 1 / 1; justify-self: end; margin-right: 5px; }
.icons { display: grid; grid-template-columns: 34px 34px; grid-auto-rows: 30px; align-items: center; }
.icons.three { grid-template-columns: 34px 34px 34px; }
.icons .first { grid-column: 1; }
.bool .rows { width: 104px; }
.units .rows { margin-left: -3px; }
.units .t { padding: 0 3px; height: 30px; }
.units .on { background: #cbcbcb; }

.tabs { flex: none; height: 30px; display: flex; align-items: flex-start; color: #444; font-size: 17px; line-height: 24px; }
.tabs button { height: 28px; padding: 0 16px 3px; }
.tabs .active { color: #0a62a8; background: #efeff2; border: solid #c8c8dc; border-width: 0 1px 1px; margin-top: -1px; }

.work { flex: 1; min-height: 0; display: flex; }
.left { flex: none; width: 493px; display: flex; flex-direction: column; }
.manager { flex: none; height: 565px; background: #fff; }
.panel-head { height: 33px; display: flex; align-items: center; padding: 0 7px 0 4px; gap: 12px; background: linear-gradient(#d9dce1, #bcc0c6); border-bottom: 1px solid #a0a0a4; }
.panel-head h2 { flex: 1; }
.panel-head svg { width: 15px; height: 16px; }
.hsplit, .vsplit { flex: none; background: repeating-conic-gradient(#4a5064 0 25%, #7e8188 0 50%) 0 0 / 4px 4px; }
.hsplit { height: 6px; }
.vsplit { width: 7px; }

.tree { margin: 0; padding: 0 0 0 4px; list-style: none; }
.tree li { display: flex; align-items: center; height: 26px; white-space: nowrap; }
.tree .l2 { padding-left: 26px; }
.tree .l3 { padding-left: 52px; }
.tree .n { width: 16px; height: 16px; margin-right: 5px; }
.exp { position: relative; width: 9px; height: 9px; border: 1px solid #808080; margin-right: 13px; background: linear-gradient(#000, #000) 1px 3px / 5px 1px no-repeat; }
.exp::after { content: ""; position: absolute; left: 9px; top: 3px; width: 11px; border-top: 1px dotted #888; }
.bold { font-weight: 700; font-size: 16px; }
.bold li { height: 24px; }
.sel { background: #e8e8e8; padding: 0 2px; margin-left: -2px; }

.props { flex: 1; min-height: 0; display: flex; flex-direction: column; }
.props-frame { flex: 1; margin: 8px 4px 0 8px; border: solid #707070; border-width: 2px 2px 0; background: #fff; }
table { border-collapse: collapse; table-layout: fixed; }
.mini { width: 461px; }
.mini th, .mini td, .grid th, .grid td { height: 31px; padding: 0 2px 1px; text-align: left; font-weight: 400; white-space: nowrap; overflow: hidden; border: 1px solid #bdbdbd; }
.mini tr > * { border-top: 0; }
.mini thead th, .grid thead th { height: 30px; }
.m-name { width: 64px; } .m-unit { width: 44px; } .m-eval { width: 88px; }

.model { flex: none; width: 277px; margin-right: 4px; border: solid #6a6a6a; border-width: 2px 0 0 1px; background: #fff; }
.viewer { flex: 1; min-width: 0; position: relative; border: solid #6a6a6a; border-width: 2px 0 0 2px; background: #fff; overflow: hidden; }
.scene { width: 100%; height: 100%; }
#grid path { fill: none; vector-effect: non-scaling-stroke; stroke-width: 1px; }
#grid .faint { stroke: #f4f4f5; }
#grid .blank { fill: #fff; }
#grid .minor { stroke: #d2d0e8; }
#grid .major { stroke: #b4b1d8; }
#grid .ax-r { stroke: #ea8480; }
#grid .ax-g { stroke: #88bc88; }
#grid .plate { fill: #8aa88a; stroke: #3c5c3c; }
.scene text { font: 21px "Liberation Sans", sans-serif; text-anchor: middle; }
.lz { fill: #4068e0; } .ly { fill: #009a00; } .lx { fill: #f01818; }
.mark { position: absolute; right: 14px; bottom: 5px; margin: 0; font: 17px/24px "Liberation Sans", sans-serif; color: #8c8c8c; }

.dialog {
  position: absolute;
  left: 12px;
  top: 286px;
  width: min(1385px, 100% - 24px);
  display: flex;
  flex-direction: column;
  background: #f0f0f0;
  border: 1px solid #a6a6a6;
  border-radius: 12px;
  box-shadow: 0 0 2px rgba(0, 0, 0, .3), 0 32px 64px rgba(0, 0, 0, .42);
  color: #000;
}
.dlg-head { height: 44px; padding: 0 17px 2px 11px; display: flex; align-items: center; justify-content: space-between; border-radius: 11px 11px 0 0; background: linear-gradient(90deg, #eaf6f9, #eaf4f9 60%, #eef2fb); }
.dlg-head svg { width: 16px; height: 16px; }
.dlg-body { padding: 12px 10px 12px 11px; }
.dlg-tabs { display: flex; }
.dlg-tabs button { height: 31px; width: 105px; padding-bottom: 3px; border: solid; border-width: 1px 2px 0 1px; border-color: #fff #707070 #fff #fff; border-radius: 2px 2px 0 0; }
.page { padding: 29px 56px 42px 55px; border: solid; border-width: 1px 2px 2px 1px; border-color: #fff #787878 #787878 #fff; }
.list { height: 449px; background: #fff; border: solid; border-width: 2px 1px 1px 2px; border-color: #707070 #fff #fff #707070; }
.grid { width: 100%; }
.grid tr > * { border-color: #c0c0c0; border-top: 0; }
.grid th, .mini th { background: #f0f0f0; text-align: center; border-color: #707070; }
.grid thead th:last-child { border-right: 0; }
.grid tr > :first-child { border-left: 0; }
.c-stub { width: 19px; } .c-name { width: 84px; } .c-unit { width: 44px; } .c-eval { width: 88px; } .c-desc { width: 124px; } .c-end { width: 13px; }
.hidden-opt { display: flex; align-items: center; justify-content: flex-end; gap: 9px; margin: 26px 94px 0 0; }
.hidden-opt input { appearance: none; width: 18px; height: 18px; margin: 0; background: #fff; border: solid; border-width: 2px 1px 1px 2px; border-color: #707070 #e3e3e3 #e3e3e3 #707070; }
.actions { display: flex; justify-content: flex-end; gap: 10px; margin-top: 12px; }
.actions button { width: 138px; height: 42px; border: solid; border-width: 1px 2px 2px 1px; border-color: #fff #707070 #707070 #fff; }
.actions .default { border-color: #6a6a6a; }
.actions button:disabled { color: #a0a0a0; text-shadow: 1px 1px #fff; }
.badge { position: absolute; left: 651px; top: 63px; width: 92px; height: 45px; display: flex; align-items: center; justify-content: center; gap: 7px; border-radius: 4px 12px 12px 12px; background: rgba(247, 160, 154, .6); box-shadow: 0 2px 6px rgba(0, 0, 0, .08); }
.badge svg { width: 30px; height: 32px; }
.badge span { width: 1px; height: 22px; background: #fff; }
.badge text { font: bold 13px "Liberation Sans", sans-serif; fill: #fff; text-anchor: middle; }
```
